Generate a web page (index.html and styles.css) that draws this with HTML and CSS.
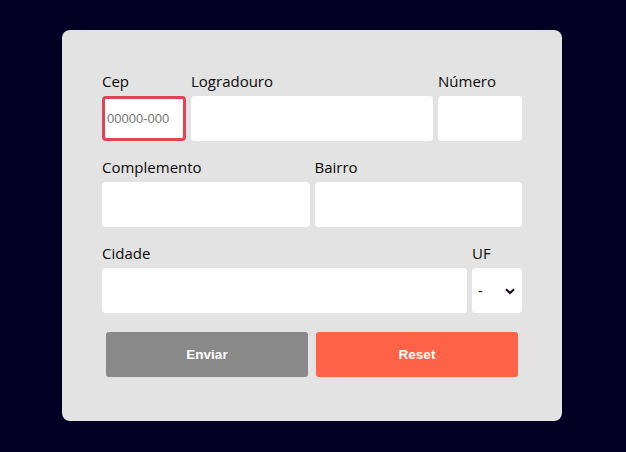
FILE: index.html
```html
<!DOCTYPE html>
<html lang="pt-BR">
<head>
<meta charset="utf-8">
<link rel="stylesheet" href="styles.css">
</head>
<body>
<main class="page">
  <form class="card">
    <div class="row row-1">
      <div class="field">
        <label class="label" for="cep">Cep</label>
        <input class="input input-error" id="cep" type="text" placeholder="00000-000">
      </div>
      <div class="field">
        <label class="label" for="logradouro">Logradouro</label>
        <input class="input" id="logradouro" type="text">
      </div>
      <div class="field">
        <label class="label" for="numero">Número</label>
        <input class="input" id="numero" type="text">
      </div>
    </div>
    <div class="row row-2">
      <div class="field">
        <label class="label" for="complemento">Complemento</label>
        <input class="input" id="complemento" type="text">
      </div>
      <div class="field">
        <label class="label" for="bairro">Bairro</label>
        <input class="input" id="bairro" type="text">
      </div>
    </div>
    <div class="row row-3">
      <div class="field">
        <label class="label" for="cidade">Cidade</label>
        <input class="input" id="cidade" type="text">
      </div>
      <div class="field">
        <label class="label" for="uf">UF</label>
        <div class="select-wrap">
          <select class="select" id="uf"><option>-</option></select>
          <svg class="chevron" width="10" height="7" viewBox="0 0 10 7"><path d="M1 1.2 L5 5 L9 1.2" fill="none" stroke="#1a0a18" stroke-width="2.2"/></svg>
        </div>
      </div>
    </div>
    <div class="actions">
      <button type="button" class="btn btn-send">Enviar</button>
      <button type="button" class="btn btn-reset">Reset</button>
    </div>
  </form>
</main>
</body>
</html>
```
FILE: styles.css
```css
* { box-sizing: border-box; }
html, body { margin: 0; padding: 0; }
body {
  background: #020022;
  font-family: "Open Sans", "Noto Sans", sans-serif;
  width: 626px;
  height: 452px;
  overflow: hidden;
}
.page {
  padding-top: 30px;
  padding-left: 62px;
  display: flex;
}
.card {
  width: 500px;
  height: 391px;
  background: #e3e3e3;
  border-radius: 8px;
  padding: 40px 40px 0;
  display: flex;
  flex-direction: column;
  gap: 15px;
}
.row { display: grid; gap: 5px; }
.row-1 { grid-template-columns: 84px 1fr 84px; }
.row-2 { grid-template-columns: 1fr 1fr; }
.row-3 { grid-template-columns: 1fr 50px; }
.field { display: flex; flex-direction: column; min-width: 0; }
.label {
  font-size: 15px;
  line-height: 22px;
  color: #0a0a0a;
  margin-bottom: 4px;
}
.input {
  height: 45px;
  width: 100%;
  border: none;
  border-radius: 4px;
  background: #fff;
  outline: none;
  font-family: "Liberation Sans", Arial, sans-serif;
  font-size: 13px;
  padding: 0 4px;
}
.input::placeholder { color: #777; }
.input-error {
  border: 3px solid #e04455;
  border-radius: 4px;
  padding: 0 2px;
}
.select-wrap { position: relative; height: 45px; }
.select {
  appearance: none;
  -webkit-appearance: none;
  width: 100%;
  height: 45px;
  border: none;
  border-radius: 4px;
  background: #fff;
  font-family: "Liberation Sans", Arial, sans-serif;
  font-size: 14px;
  color: #000;
  padding: 0 6px;
  outline: none;
}
.chevron { position: absolute; right: 7px; top: 20px; pointer-events: none; }
.actions { display: flex; margin-top: 4px; }
.btn {
  flex: 1;
  height: 45px;
  margin: 0 4px;
  border: none;
  border-radius: 3px;
  color: #fff;
  font-family: "Liberation Sans", Arial, sans-serif;
  font-weight: bold;
  font-size: 13.5px;
}
.btn-send { background: #898989; }
.btn-reset { background: #ff6347; }
```
